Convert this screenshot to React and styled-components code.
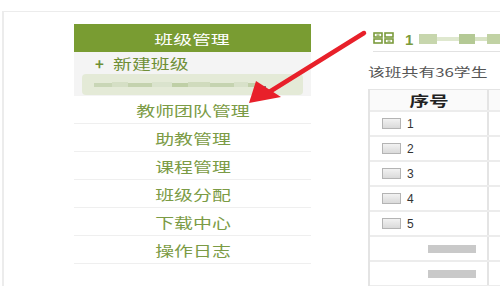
import React from "react";
import styled, { createGlobalStyle } from "styled-components";

const GlobalStyle = createGlobalStyle`
  html, body {
    margin: 0;
    padding: 0;
    background: #fff;
    overflow: hidden;
  }
  body {
    font-family: "Liberation Sans", "Noto Sans CJK SC", sans-serif;
  }
`;

const Page = styled.div`
  width: 500px;
  height: 286px;
  overflow: hidden;
  padding-top: 11px;
  box-sizing: border-box;
`;

const Frame = styled.div`
  margin-left: 2px;
  height: 100%;
  border-top: 1px solid #ececec;
  border-left: 2px solid #ececec;
  display: flex;
  position: relative;
`;

// the screenshot is stretched sideways, so CJK text gets a horizontal scale
const Wide = styled.span`
  display: inline-block;
  transform: scaleX(${(p) => p.sx || 1.35});
  transform-origin: ${(p) => (p.left ? "left center" : "center")};
  white-space: nowrap;
`;

const Sidebar = styled.div`
  flex-shrink: 0;
  margin-left: 70px;
  margin-top: 12px;
  width: 237px;
  display: flex;
  flex-direction: column;
`;

const SideHeader = styled.div`
  height: 28px;
  background: #799c32;
  color: #fff;
  font-size: 13px;
  display: flex;
  align-items: center;
  justify-content: center;
  font-family: "Noto Sans CJK SC", sans-serif;
`;

const ClassBox = styled.div`
  background: #f4f4f4;
  padding: 2px 8px 1px 8px;
  display: flex;
  flex-direction: column;
`;

const NewClass = styled.div`
  height: 18px;
  display: flex;
  align-items: center;
  gap: 9px;
  padding-left: 13px;
  color: #6f8f36;
  font-size: 14px;
  font-family: "Noto Sans CJK SC", sans-serif;
`;

const Plus = styled.span`
  font-weight: bold;
  font-size: 15px;
`;

const ClassRow = styled.div`
  margin-top: 2px;
  height: 21px;
  border-radius: 4px;
  background: #e4ead7;
  display: flex;
  align-items: center;
  padding-left: 12px;
`;

const Blur = styled.span`
  display: inline-block;
  flex-shrink: 0;
  height: ${(p) => p.h || 4}px;
  width: ${(p) => p.w}px;
  background: ${(p) => p.c};
`;

const BlurGroup = styled.div`
  display: flex;
  align-items: center;
  height: 14px;
  margin-left: -4px;
  overflow: hidden;
`;

const MenuItem = styled.div`
  height: 27px;
  border-bottom: 1px solid #efefef;
  display: flex;
  align-items: center;
  justify-content: center;
  color: #7b9b45;
  font-size: 14px;
  font-family: "Noto Sans CJK SC", sans-serif;
`;

const Main = styled.div`
  margin-left: 57px;
  margin-top: 20px;
  flex: 1;
  min-width: 0;
  display: flex;
  flex-direction: column;
`;

const TitleBar = styled.div`
  margin-left: 5px;
  height: 21px;
  border-bottom: 1px solid #e2e2e2;
  display: flex;
  align-items: flex-start;
  gap: 10px;
`;

const IconBox = styled.svg`
  flex-shrink: 0;
`;

const TitleNum = styled.span`
  flex-shrink: 0;
  color: #7b9b3c;
  font-weight: bold;
  font-size: 15px;
  line-height: 14px;
  margin-top: 1px;
`;

const Count = styled.div`
  margin-top: 13px;
  height: 14px;
  font-size: 12px;
  color: #555;
  font-family: "Noto Sans CJK SC", sans-serif;
  line-height: 14px;
`;

const Table = styled.div`
  margin-top: 10px;
  border-left: 2px solid #e4e4e4;
  border-top: 1px solid #e4e4e4;
  display: flex;
  flex-direction: column;
  width: 200px;
`;

const Row = styled.div`
  display: grid;
  grid-template-columns: 119px 1fr;
  height: ${(p) => (p.head ? 20 : 23)}px;
  border-bottom: 2px solid #ececec;
  background: ${(p) => (p.head ? "#fafafa" : "#fff")};
`;

const Cell = styled.div`
  border-right: 2px solid #e4e4e4;
  display: flex;
  align-items: center;
  justify-content: ${(p) => (p.center ? "center" : "flex-start")};
  padding-left: ${(p) => (p.center ? 0 : 12)}px;
  gap: 6px;
  font-size: 12px;
  color: #333;
`;

const HeadText = styled.span`
  font-weight: bold;
  font-size: 14px;
  font-family: "Noto Sans CJK SC", sans-serif;
  color: #222;
`;

const Check = styled.span`
  display: inline-block;
  width: 17px;
  height: 9px;
  border: 1px solid #b4b4b4;
  background: linear-gradient(#f2f2f2, #dadada);
`;

const GrayBar = styled.span`
  display: inline-block;
  width: 48px;
  height: 8px;
  background: #c9c9c9;
  margin-left: 46px;
`;

const Arrow = styled.svg`
  position: absolute;
  left: 236px;
  top: 2px;
  pointer-events: none;
`;

function IdIcon() {
  return (
    <IconBox width="22" height="12" viewBox="0 0 22 12">
      <g fill="none" stroke="#7b9b3c" strokeWidth="1.6">
        <rect x="1" y="1" width="8" height="4" />
        <rect x="1" y="7" width="8" height="4" />
        <rect x="12" y="1" width="8" height="4" />
        <rect x="12" y="7" width="8" height="4" />
      </g>
      <rect x="3.5" y="2.5" width="3" height="1.2" fill="#7b9b3c" />
      <rect x="14.5" y="8.5" width="3" height="1.2" fill="#7b9b3c" />
    </IconBox>
  );
}

const menu = ["教师团队管理", "助教管理", "课程管理", "班级分配", "下载中心", "操作日志"];

const titleBlur = [
  [18, "#c7d6ad", 10],
  [22, "#dfe8cf", 4],
  [16, "#b4c995", 10],
  [12, "#d8e3c4", 4],
  [16, "#c1d2a4", 10],
  [14, "#e4ecd8", 4],
  [20, "#a9c186", 12],
  [12, "#d0ddb8", 8],
];

const classBlur = [
  [18, "#c9d6b6"],
  [16, "#d5dfc5"],
  [24, "#c4d2ae"],
  [20, "#dae3cd"],
  [16, "#bfcfa6"],
  [22, "#d0dbbd"],
  [24, "#c5d3b0"],
  [14, "#d8e1c9"],
  [10, "#c2d0aa"],
];

export default function App() {
  return (
    <>
      <GlobalStyle />
      <Page>
        <Frame>
          <Sidebar>
            <SideHeader>
              <Wide sx={1.45}>班级管理</Wide>
            </SideHeader>
            <ClassBox>
              <NewClass>
                <Plus>+</Plus>
                <Wide left>新建班级</Wide>
              </NewClass>
              <ClassRow>
                {classBlur.map(([w, c], i) => (
                  <Blur key={i} w={w} c={c} h={i % 2 ? 5 : 4} />
                ))}
                <Blur w={2} c="#7a7a7a" h={2} style={{ marginLeft: 6, marginTop: 4 }} />
              </ClassRow>
            </ClassBox>
            {menu.map((m) => (
              <MenuItem key={m}>
                <Wide>{m}</Wide>
              </MenuItem>
            ))}
          </Sidebar>
          <Main>
            <TitleBar>
              <IdIcon />
              <TitleNum>1</TitleNum>
              <BlurGroup>
                {titleBlur.map(([w, c, h], i) => (
                  <Blur key={i} w={w} c={c} h={h} />
                ))}
              </BlurGroup>
            </TitleBar>
            <Count>
              <Wide left sx={1.4}>
                该班共有36学生
              </Wide>
            </Count>
            <Table>
              <Row head>
                <Cell center>
                  <HeadText>
                    <Wide sx={1.4}>序号</Wide>
                  </HeadText>
                </Cell>
                <Cell />
              </Row>
              {[1, 2, 3, 4, 5].map((n) => (
                <Row key={n}>
                  <Cell>
                    <Check />
                    <span>{n}</span>
                  </Cell>
                  <Cell />
                </Row>
              ))}
              <Row>
                <Cell>
                  <GrayBar />
                </Cell>
                <Cell />
              </Row>
              <Row>
                <Cell>
                  <GrayBar />
                </Cell>
                <Cell />
              </Row>
            </Table>
          </Main>
          <Arrow width="135" height="100" viewBox="0 0 135 100">
            <line x1="124" y1="19" x2="26" y2="80" stroke="#e8202a" strokeWidth="4.5" strokeLinecap="round" />
            <polygon points="9,89 16,67 41,83" fill="#e8202a" />
          </Arrow>
        </Frame>
      </Page>
    </>
  );
}
